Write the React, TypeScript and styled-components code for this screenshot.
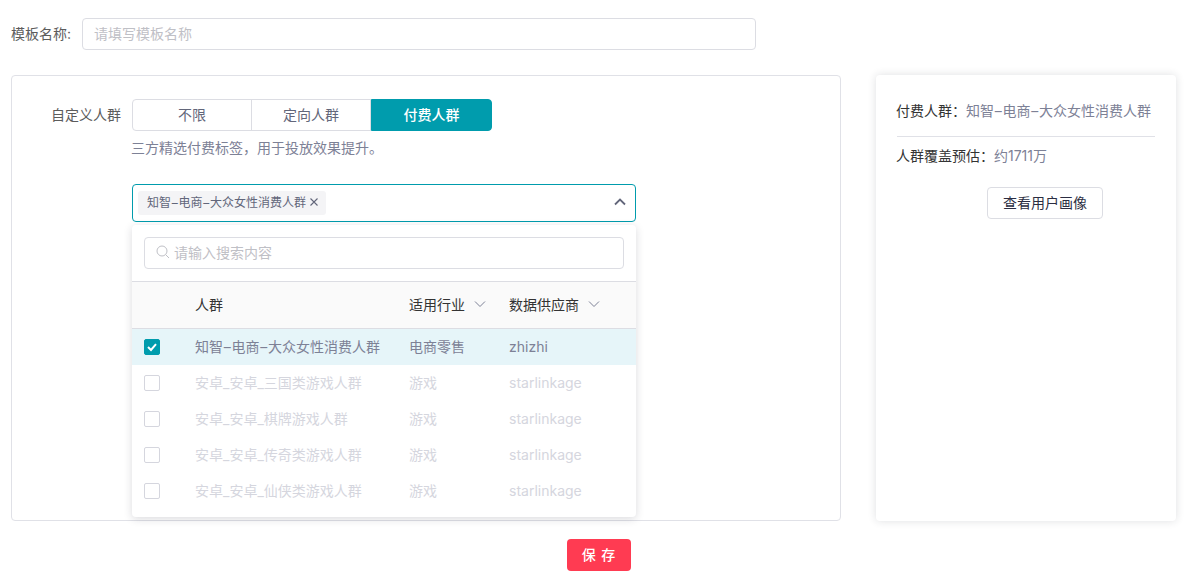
import React from 'react'
import styled, { createGlobalStyle } from 'styled-components'

const GlobalStyle = createGlobalStyle`
  html, body {
    margin: 0;
    padding: 0;
    background: #fff;
  }
  body {
    font-family: Inter, "Noto Sans CJK SC", sans-serif;
    font-size: 14px;
    color: #333;
  }
  * {
    box-sizing: border-box;
  }
`

const Page = styled.div`
  width: 1204px;
  height: 578px;
  padding: 18px 28px 0 11px;
  overflow: hidden;
`

const NameRow = styled.div`
  display: flex;
  align-items: center;
  gap: 12px;
  height: 32px;
`

const NameLabel = styled.label`
  width: 59px;
  padding-bottom: 2px;
  color: #5c5c5c;
  white-space: nowrap;
`

const TextInput = styled.div`
  display: flex;
  align-items: center;
  gap: 4px;
  border: 1px solid #dcdde3;
  border-radius: 4px;
  height: 32px;
  padding: 0 11px 2px;
  color: #bfc0c6;
  background: #fff;
`

const NameInput = styled(TextInput)`
  width: 674px;
`

const Columns = styled.div`
  display: flex;
  gap: 35px;
  margin-top: 25px;
  height: 446px;
`

const Panel = styled.section`
  position: relative;
  width: 830px;
  border: 1px solid #e0e1e7;
  border-radius: 4px;
  padding: 23px 0 0 40px;
`

const FieldRow = styled.div`
  display: flex;
  gap: 11px;
`

const FieldLabel = styled.div`
  width: 70px;
  margin-left: -1px;
  line-height: 32px;
  color: #5c5c5c;
  text-align: right;
  white-space: nowrap;
`

const FieldBody = styled.div`
  position: relative;
  width: 504px;
`

const Segments = styled.div`
  display: flex;
  width: 360px;
  height: 32px;
`

const Segment = styled.div<{ $active?: boolean }>`
  flex: 0 0 120px;
  display: flex;
  align-items: center;
  justify-content: center;
  padding-bottom: 2px;
  border: 1px solid ${p => (p.$active ? '#009cad' : '#dcdde3')};
  margin-left: -1px;
  background: ${p => (p.$active ? '#009cad' : '#fff')};
  color: ${p => (p.$active ? '#fff' : '#62667a')};
  font-weight: ${p => (p.$active ? 500 : 400)};
  &:first-child {
    margin-left: 0;
    border-radius: 4px 0 0 4px;
  }
  &:last-child {
    flex: 0 0 121px;
    margin-left: 0;
    border-radius: 0 4px 4px 0;
  }
`

const Helper = styled.div`
  margin-top: 7px;
  text-indent: -1px;
  line-height: 20px;
  color: #7d8196;
`

const SelectBox = styled.div`
  display: flex;
  align-items: center;
  justify-content: space-between;
  margin-top: 26px;
  height: 38px;
  padding: 0 9px 0 5px;
  border: 1px solid #009cad;
  border-radius: 4px;
`

const Tag = styled.span`
  display: inline-flex;
  align-items: center;
  gap: 3px;
  height: 24px;
  padding: 0 7px 3px 9px;
  border-radius: 3px;
  background: #f4f4f6;
  font-size: 12px;
  color: #62667a;
`

const Dash = styled.span`
  margin: 0 0.75px;
`

const Dropdown = styled.div`
  position: absolute;
  top: 126px;
  left: 0;
  width: 504px;
  height: 292px;
  border-radius: 4px;
  background: #fff;
  box-shadow: 0 2px 8px rgba(30, 32, 50, 0.16);
`

const SearchWrap = styled.div`
  padding: 12px 12px;
`

const SearchInput = styled(TextInput)`
  height: 32px;
`

const Table = styled.div`
  display: flex;
  flex-direction: column;
`

const HeaderRow = styled.div`
  display: grid;
  grid-template-columns: 63px 214px 100px 1fr;
  align-items: center;
  height: 48px;
  padding-bottom: 2px;
  background: #fafafa;
  border-top: 1px solid #dcdde3;
  border-bottom: 1px solid #dcdde3;
  color: #333;
`

const HeaderCell = styled.div`
  display: flex;
  align-items: center;
  gap: 9px;
  white-space: nowrap;
`

const Row = styled.div<{ $selected?: boolean; $disabled?: boolean }>`
  display: grid;
  grid-template-columns: 63px 214px 100px 1fr;
  align-items: center;
  height: 36px;
  padding-bottom: 2px;
  background: ${p => (p.$selected ? '#e6f5f9' : 'transparent')};
  color: ${p => (p.$disabled ? '#d5d6de' : '#7d8196')};
  white-space: nowrap;
`

const CheckCell = styled.div`
  padding: 2px 0 0 12px;
  display: flex;
`

const Check = styled.span<{ $on?: boolean }>`
  display: flex;
  align-items: center;
  justify-content: center;
  width: 16px;
  height: 16px;
  border-radius: 2px;
  border: 1px solid ${p => (p.$on ? '#009cad' : '#d5d6de')};
  background: ${p => (p.$on ? '#009cad' : '#fff')};
`

const Side = styled.aside`
  width: 300px;
  border-radius: 4px;
  padding: 26px 21px 0;
  background: #fff;
  box-shadow: 0 0 8px rgba(30, 32, 50, 0.14);
`

const InfoLine = styled.div`
  margin-left: -1px;
  line-height: 20px;
  color: #333;
  white-space: nowrap;
`

const InfoValue = styled.span`
  color: #7d8196;
`

const Divider = styled.div`
  height: 1px;
  margin: 15px 0 9px;
  background: #e0e1e7;
`

const GhostButton = styled.button`
  display: block;
  width: 116px;
  height: 32px;
  margin: 21px 0 0 90px;
  padding: 0 0 2px;
  border: 1px solid #dcdde3;
  border-radius: 4px;
  background: #fff;
  color: #2b2d42;
  font: inherit;
`

const Footer = styled.div`
  display: flex;
  justify-content: center;
  width: 1176px;
  margin-top: 18px;
`

const SaveButton = styled.button`
  width: 64px;
  height: 32px;
  padding: 0 0 2px;
  border: none;
  border-radius: 4px;
  background: #ff3b52;
  color: #fff;
  font: inherit;
  font-weight: 500;
  letter-spacing: 1px;
`

const ChevronUp = styled.svg`
  margin-bottom: 3px;
`

const Chevron = () => (
  <svg width={12} height={12} viewBox="0 0 12 12" fill="none" stroke="#7d8196" strokeWidth={1}>
    <path d="M1 3.5 L6 8.5 L11 3.5" />
  </svg>
)

const AudienceName = () => (
  <span>
    知智<Dash>–</Dash>电商<Dash>–</Dash>大众女性消费人群
  </span>
)

const audiences = ['安卓_安卓_三国类游戏人群', '安卓_安卓_棋牌游戏人群', '安卓_安卓_传奇类游戏人群', '安卓_安卓_仙侠类游戏人群']

const App: React.FC = () => {
  return (
    <Page>
      <GlobalStyle />
      <NameRow>
        <NameLabel>模板名称:</NameLabel>
        <NameInput>请填写模板名称</NameInput>
      </NameRow>
      <Columns>
        <Panel>
          <FieldRow>
            <FieldLabel>自定义人群</FieldLabel>
            <FieldBody>
              <Segments>
                <Segment>不限</Segment>
                <Segment>定向人群</Segment>
                <Segment $active>付费人群</Segment>
              </Segments>
              <Helper>三方精选付费标签，用于投放效果提升。</Helper>
              <SelectBox>
                <Tag>
                  <AudienceName />
                  <svg width="10" height="10" viewBox="0 0 10 10" stroke="#62667a" strokeWidth="1.1">
                    <path d="M1.5 1.5 L8.5 8.5 M8.5 1.5 L1.5 8.5" />
                  </svg>
                </Tag>
                <ChevronUp width={12} height={12} viewBox="0 0 12 12" fill="none" stroke="#62667a" strokeWidth={1.8}>
                  <path d="M1 8.5 L6 3.5 L11 8.5" />
                </ChevronUp>
              </SelectBox>
              <Dropdown>
                <SearchWrap>
                  <SearchInput>
                    <svg width="14" height="14" viewBox="0 0 14 14" fill="none" stroke="#bfc0c6" strokeWidth="1">
                      <circle cx="6" cy="6" r="5" />
                      <path d="M9.7 9.7 L13 13" />
                    </svg>
                    请输入搜索内容
                  </SearchInput>
                </SearchWrap>
                <Table>
                  <HeaderRow>
                    <div />
                    <HeaderCell>人群</HeaderCell>
                    <HeaderCell>
                      适用行业
                      <Chevron />
                    </HeaderCell>
                    <HeaderCell>
                      数据供应商
                      <Chevron />
                    </HeaderCell>
                  </HeaderRow>
                  <Row $selected>
                    <CheckCell>
                      <Check $on>
                        <svg width="12" height="12" viewBox="0 0 12 12" fill="none" stroke="#fff" strokeWidth="2">
                          <path d="M2 6 L5 9 L10 3.2" />
                        </svg>
                      </Check>
                    </CheckCell>
                    <div>
                      <AudienceName />
                    </div>
                    <div>电商零售</div>
                    <div>zhizhi</div>
                  </Row>
                  {audiences.map(name => (
                    <Row $disabled key={name}>
                      <CheckCell>
                        <Check />
                      </CheckCell>
                      <div>{name}</div>
                      <div>游戏</div>
                      <div>starlinkage</div>
                    </Row>
                  ))}
                </Table>
              </Dropdown>
            </FieldBody>
          </FieldRow>
        </Panel>
        <Side>
          <InfoLine>
            付费人群：
            <InfoValue>
              <AudienceName />
            </InfoValue>
          </InfoLine>
          <Divider />
          <InfoLine>
            人群覆盖预估：<InfoValue>约1711万</InfoValue>
          </InfoLine>
          <GhostButton>查看用户画像</GhostButton>
        </Side>
      </Columns>
      <Footer>
        <SaveButton>保 存</SaveButton>
      </Footer>
    </Page>
  )
}

export default App
